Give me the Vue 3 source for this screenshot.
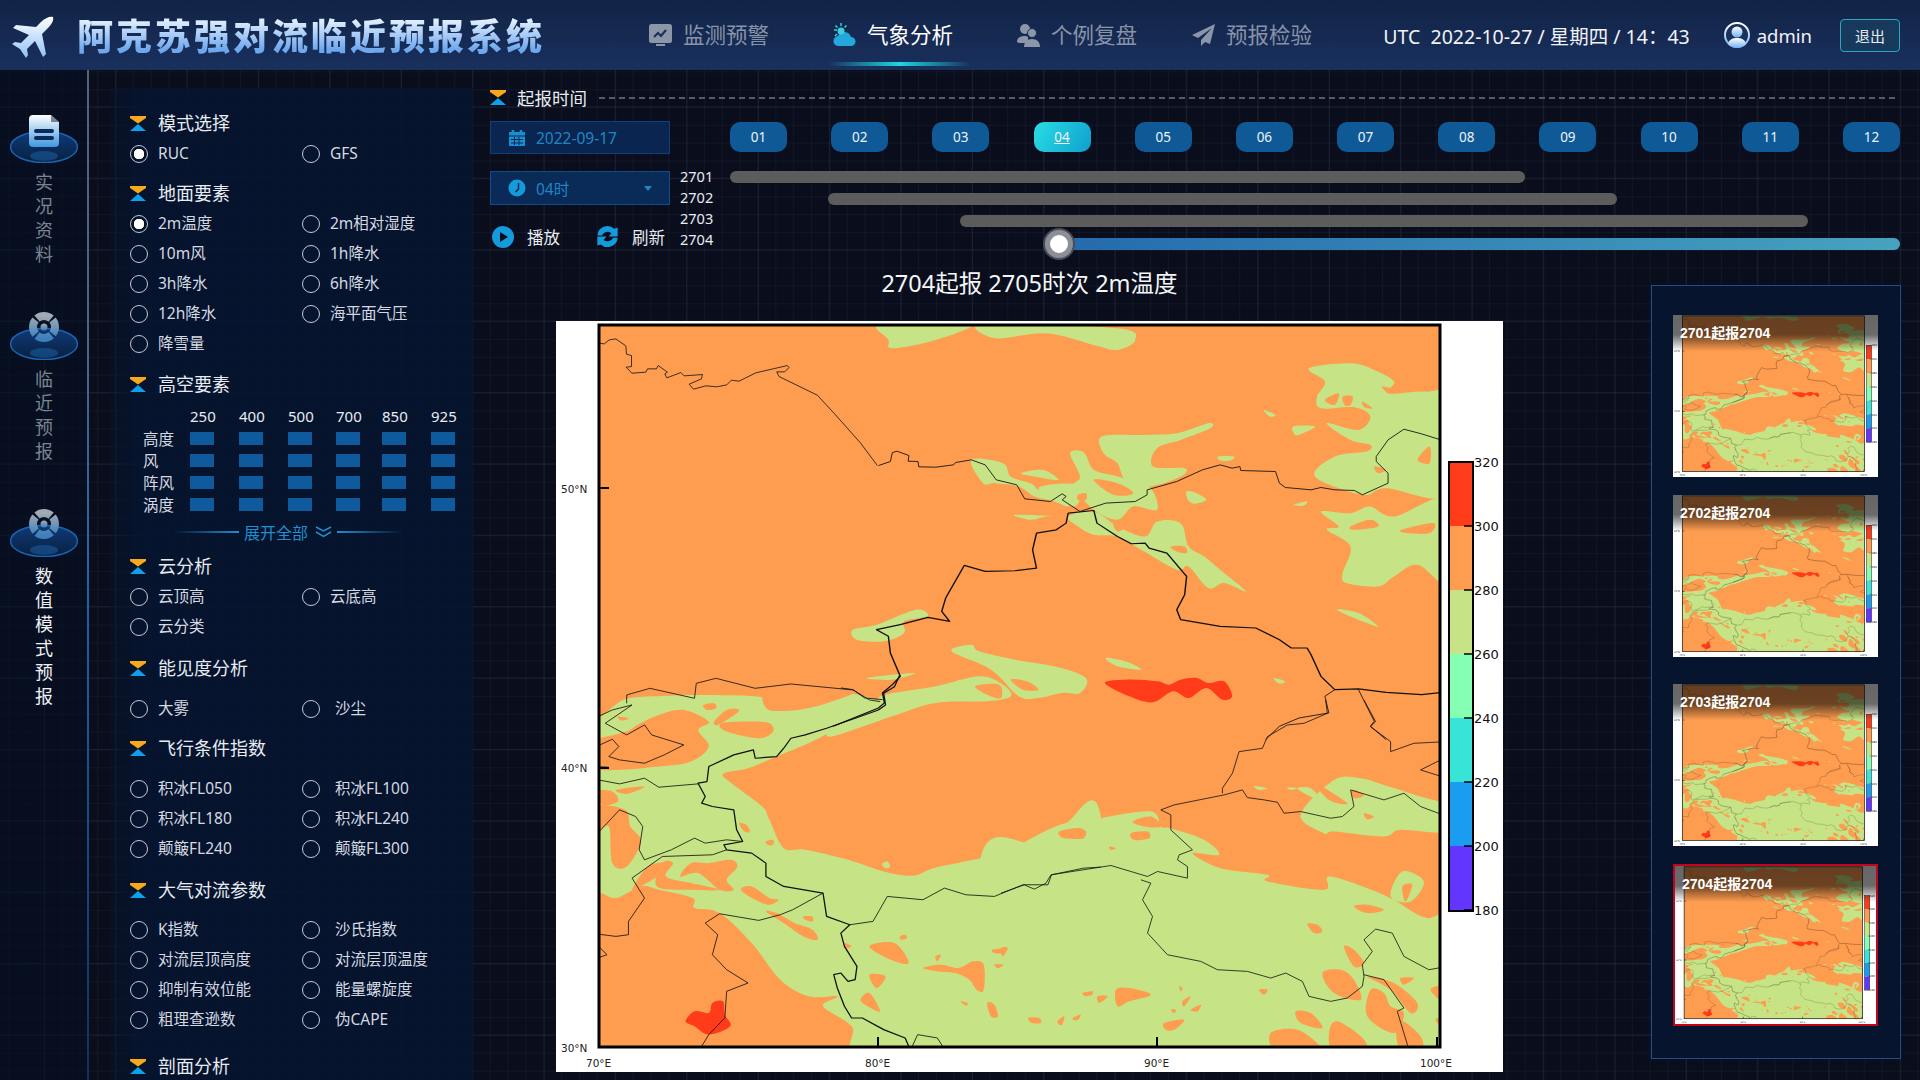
<template>
  <div class="page">
    <header class="topbar">
      <svg class="logo" viewBox="0 0 42 42" width="42" height="42">
        <defs>
          <linearGradient id="logoFill" x1="0" y1="0" x2="0" y2="1">
            <stop offset="0" stop-color="#ffffff" />
            <stop offset="1" stop-color="#8fc1f5" />
          </linearGradient>
        </defs>
        <path fill="url(#logoFill)" d="M41 1C38 0 33 2 29 6L24 11 4 9 1 12 17 19 9 27 3 26 0 28 8 33 14 42 16 39 15 33 23 25 31 41 34 38 30 18 36 12C40 8 42 4 41 1Z" />
      </svg>
      <h1 class="title">阿克苏强对流临近预报系统</h1>
      <nav class="nav">
        <a v-for="item in navItems" :key="item.name" class="nav-item" :class="{ active: item.active }">
          <svg v-if="item.icon === 'monitor'" viewBox="0 0 23 24" width="23" height="24">
            <rect x="0" y="1" width="23" height="19" rx="2.5" fill="#8b96a8" />
            <rect x="7" y="21" width="9" height="2" fill="#8b96a8" />
            <path d="M5 14l4-4 3 3 5-6" fill="none" stroke="#1a2f58" stroke-width="2" />
          </svg>
          <svg v-else-if="item.icon === 'cloud'" viewBox="0 0 23 24" width="23" height="24">
            <path d="M6 23a5 5 0 0 1-1-10 7 7 0 0 1 13 1 4.500 4.500 0 0 1 0 9Z" fill="#22a8dc" />
            <circle cx="8" cy="8" r="3.500" fill="#3bd0dc" />
            <path d="M8 0v3M1 7h3M2.500 2.500l2 2M13.500 2.500l-2 2M2 13l2-2" stroke="#3bd0dc" stroke-width="1.500" />
          </svg>
          <svg v-else-if="item.icon === 'people'" viewBox="0 0 23 24" width="23" height="24">
            <circle cx="8" cy="6" r="5" fill="#8b96a8" />
            <path d="M0 19c0-4 3-6 8-6 1 0 2 0 3 1v6H2Z" fill="#8b96a8" />
            <circle cx="15" cy="10" r="4.500" fill="#8b96a8" stroke="#1a2f58" />
            <path d="M7 24c0-5 3-8 8-8s8 3 8 8Z" fill="#8b96a8" />
          </svg>
          <svg v-else viewBox="0 0 23 24" width="23" height="24">
            <path d="M23 1L0 12l6 3L20 5 9 17v6l4-4 5 2Z" fill="#8b96a8" />
          </svg>
          <span>{{ item.name }}</span>
          <i v-if="item.active" class="nav-line"></i>
        </a>
      </nav>
      <div class="status">
        <span class="clock">{{ clockText }}</span>
        <svg class="user-icon" viewBox="0 0 26 26" width="26" height="26">
          <defs>
            <linearGradient id="userFill" x1="0" y1="0" x2="0" y2="1">
              <stop offset="0" stop-color="#ffffff" />
              <stop offset="1" stop-color="#6fb0f5" />
            </linearGradient>
          </defs>
          <circle cx="13" cy="13" r="12" fill="#1a3159" stroke="url(#userFill)" stroke-width="2" />
          <circle cx="13" cy="10" r="5.500" fill="url(#userFill)" />
          <path d="M4 22c1-5 5-6 9-6s8 1 9 6a12 12 0 0 1-18 0Z" fill="url(#userFill)" />
        </svg>
        <span class="user-name">admin</span>
        <button class="logout">退出</button>
      </div>
    </header>

    <div class="body">
      <aside class="rail">
        <div v-for="entry in railItems" :key="entry.label" class="rail-item" :class="{ current: entry.current }">
          <svg viewBox="0 0 68 48" width="68" height="48">
            <defs v-if="entry.icon === 'doc'">
              <linearGradient id="discFill" x1="0" y1="0" x2="0" y2="1">
                <stop offset="0" stop-color="#0f3a78" />
                <stop offset="1" stop-color="#08203f" />
              </linearGradient>
              <linearGradient id="docFill" x1="0" y1="0" x2="0" y2="1">
                <stop offset="0" stop-color="#ffffff" />
                <stop offset="1" stop-color="#3f97e0" />
              </linearGradient>
              <linearGradient id="targetFill" x1="0" y1="0" x2="0" y2="1">
                <stop offset="0" stop-color="#a4aab2" />
                <stop offset="1" stop-color="#3d80bc" />
              </linearGradient>
            </defs>
            <ellipse cx="34" cy="32" rx="33.500" ry="15.500" fill="url(#discFill)" stroke="#1a63b0" stroke-width="1.500" />
            <ellipse cx="34" cy="41" rx="14" ry="5" fill="#1a5a9c" opacity=".6" />
            <g v-if="entry.icon === 'doc'">
              <path d="M22 0h19l8 7v21a4 4 0 0 1-4 4H23a4 4 0 0 1-4-4V4a4 4 0 0 1 4-4Z" fill="url(#docFill)" />
              <path d="M41 0l8 7h-8Z" fill="#0a1a36" opacity=".5" />
              <rect x="24" y="14" width="20" height="4" rx="2" fill="#0b2c58" />
              <rect x="24" y="21" width="20" height="4" rx="2" fill="#0b2c58" />
            </g>
            <g v-else>
              <circle cx="34" cy="15" r="11" fill="none" stroke="url(#targetFill)" stroke-width="8" stroke-dasharray="15.300 2" stroke-dashoffset="8" />
              <circle cx="34" cy="15" r="3.500" fill="url(#targetFill)" />
            </g>
          </svg>
          <div class="rail-label">
            <span v-for="ch in entry.label" :key="ch">{{ ch }}</span>
          </div>
        </div>
      </aside>

      <section class="panel">
        <div v-for="sec in sections" :key="sec.title" class="group" :class="{ wide: sec.wide }" :style="{ marginTop: sec.top + 'px' }">
          <div class="group-head">
            <svg viewBox="0 0 16 15" width="16" height="15">
              <path d="M0 0h16v2L8 7.500 0 2Z" fill="#f7a81b" />
              <path d="M8 8l8 7H0Z" fill="#0fa0ea" />
            </svg>
            <span>{{ sec.title }}</span>
          </div>
          <template v-if="sec.table">
            <div class="levels">
              <span></span>
              <span v-for="lv in levels" :key="lv" class="level-num">{{ lv }}</span>
              <template v-for="row in levelRows" :key="row">
                <span class="level-name">{{ row }}</span>
                <i v-for="lv in levels" :key="lv" class="level-cell"></i>
              </template>
            </div>
            <div class="expand">
              <i class="expand-line left"></i>
              <span>展开全部</span>
              <svg viewBox="0 0 17 12" width="17" height="12">
                <path d="M1 1l7.500 4L16 1M1 6l7.500 4.500L16 6" fill="none" stroke="#1e8fd0" stroke-width="1.500" />
              </svg>
              <i class="expand-line right"></i>
            </div>
          </template>
          <div v-else class="options" :style="{ marginTop: (sec.gap || 0) + 'px' }">
            <label v-for="opt in sec.items" :key="opt" class="option">
              <i class="radio" :class="{ on: opt === 'RUC' || opt === '2m温度' }"></i>
              <span>{{ opt }}</span>
            </label>
          </div>
        </div>
      </section>

      <main class="main">
        <div class="time-head">
          <svg viewBox="0 0 16 15" width="16" height="15">
            <path d="M0 0h16v2L8 7.500 0 2Z" fill="#f7a81b" />
            <path d="M8 8l8 7H0Z" fill="#0fa0ea" />
          </svg>
          <span>起报时间</span>
          <i class="dash"></i>
        </div>

        <div class="controls">
          <div class="ctrl-left">
            <div class="field">
              <svg viewBox="0 0 18 18" width="18" height="18">
                <path d="M1 3h16v14H1Z" fill="#1a8fd0" />
                <path d="M5 1v4M13 1v4" stroke="#1a8fd0" stroke-width="2.500" />
                <path d="M1 7h16M3 10.500h12M3 14h12M6.500 8v8M11 8v8" stroke="#0a2650" stroke-width="1" />
              </svg>
              <span>2022-09-17</span>
            </div>
            <div class="field select">
              <svg viewBox="0 0 18 18" width="18" height="18">
                <circle cx="9" cy="9" r="8.500" fill="#149bdc" />
                <path d="M10.500 4v6l-3 3" fill="none" stroke="#0a2650" stroke-width="1.500" />
              </svg>
              <span>04时</span>
              <i class="caret"></i>
            </div>
            <div class="actions">
              <svg viewBox="0 0 22 22" width="22" height="22">
                <circle cx="11" cy="11" r="11" fill="#149bdc" />
                <path d="M8 6l8 5-8 5Z" fill="#0a0e1c" />
              </svg>
              <span class="act-text">播放</span>
              <svg class="refresh" viewBox="0 0 24 24" width="27" height="27">
                <path d="M3 11a9 9 0 0 1 15-6l3-1v8h-8l2.500-3a5.500 5.500 0 0 0-8.500 2Z" fill="#149bdc" />
                <path d="M21 13a9 9 0 0 1-15 6l-3 1v-8h8l-2.500 3a5.500 5.500 0 0 0 8.500-2Z" fill="#149bdc" />
              </svg>
              <span class="act-text">刷新</span>
            </div>
          </div>

          <div class="run-labels">
            <span v-for="run in runs" :key="run.name">{{ run.name }}</span>
          </div>

          <div class="timeline">
            <div class="hours">
              <span v-for="h in hours" :key="h" class="hour" :class="{ active: h === '04' }">{{ h }}</span>
            </div>
            <div class="tracks">
              <div v-for="run in runs" :key="run.name" class="track-row">
                <div class="track" :class="{ live: run.live }" :style="{ marginLeft: run.from + 'px', width: run.to - run.from + 'px' }">
                  <i v-if="run.live" class="knob"></i>
                </div>
              </div>
            </div>
          </div>
        </div>

        <div class="stage">
          <div class="center">
            <h2 class="map-title">2704起报 2705时次 2m温度</h2>
            <svg class="map" viewBox="555 321 947 751" width="947" height="751">
              <defs>
                <clipPath id="plotClip"><rect x="598" y="325" width="841" height="722" /></clipPath>
              </defs>
              <g id="weatherMap">
                <rect x="555" y="321" width="947" height="751" fill="#ffffff" />
                <g clip-path="url(#plotClip)">
                  <rect x="598" y="325" width="841" height="722" fill="#fe9c50" />
                  <g v-for="(layer, i) in fillLayers" :key="i" :transform="frames[layer.frame]" :fill="layer.fill">
                    <path v-for="(d, j) in layer.paths" :key="j" :d="d" />
                  </g>
                  <g v-for="(layer, i) in lineLayers" :key="'l' + i" :transform="frames[layer.frame]" fill="none" stroke="#111" :stroke-width="layer.width" stroke-linejoin="round">
                    <polyline v-for="(pts, j) in layer.lines" :key="j" :points="pts" />
                  </g>
                </g>
                <rect x="598" y="325" width="841" height="722" fill="none" stroke="#000" stroke-width="3" />
                <path d="M598 488h10M598 768h10M877 1047v-10M1156 1047v-10M1436 1047v-10" stroke="#000" stroke-width="2" />
                <g class="tick-text">
                  <text x="560" y="493">50°N</text>
                  <text x="560" y="772">40°N</text>
                  <text x="560" y="1052">30°N</text>
                  <text x="585" y="1067">70°E</text>
                  <text x="864" y="1067">80°E</text>
                  <text x="1143" y="1067">90°E</text>
                  <text x="1419" y="1067">100°E</text>
                </g>
                <rect v-for="band in colorBands" :key="band.color" x="1448" :y="band.y" width="24" height="64" :fill="band.color" />
                <rect x="1448" y="462" width="24" height="449" fill="none" stroke="#000" stroke-width="2" />
                <g v-for="band in colorTicks" :key="band.label">
                  <path :d="`M1463 ${band.y}h9`" stroke="#000" stroke-width="1.500" />
                  <text class="bar-text" x="1473" :y="band.y + 5">{{ band.label }}</text>
                </g>
              </g>
            </svg>
          </div>

          <aside class="thumbs">
            <div v-for="t in thumbs" :key="t.name" class="thumb" :class="[t.cls, { selected: t.selected }]">
              <svg viewBox="555 321 947 751" preserveAspectRatio="none">
                <use href="#weatherMap" />
              </svg>
              <div class="thumb-cap">{{ t.name }}起报2704</div>
            </div>
          </aside>
        </div>
      </main>
    </div>
  </div>
</template>

<script setup>
const clockText = 'UTC  2022-10-27 / 星期四 / 14：43';

const navItems = [
  { name: '监测预警', icon: 'monitor' },
  { name: '气象分析', icon: 'cloud', active: true },
  { name: '个例复盘', icon: 'people' },
  { name: '预报检验', icon: 'plane' },
];

const railItems = [
  { label: '实况资料', icon: 'doc' },
  { label: '临近预报', icon: 'target' },
  { label: '数值模式预报', icon: 'target', current: true },
];

const sections = [
  { title: '模式选择', top: 0, items: ['RUC', 'GFS'] },
  { title: '地面要素', top: 10, items: ['2m温度', '2m相对湿度', '10m风', '1h降水', '3h降水', '6h降水', '12h降水', '海平面气压', '降雪量'] },
  { title: '高空要素', top: 11, table: true },
  { title: '云分析', top: 10, items: ['云顶高', '云底高', '云分类'] },
  { title: '能见度分析', top: 12, gap: 10, wide: true, items: ['大雾', '沙尘'] },
  { title: '飞行条件指数', top: 10, gap: 10, wide: true, items: ['积冰FL050', '积冰FL100', '积冰FL180', '积冰FL240', '颠簸FL240', '颠簸FL300'] },
  { title: '大气对流参数', top: 12, gap: 9, wide: true, items: ['K指数', '沙氏指数', '对流层顶高度', '对流层顶温度', '抑制有效位能', '能量螺旋度', '粗理查逊数', '伪CAPE'] },
  { title: '剖面分析', top: 17, items: [] },
];

const levels = ['250', '400', '500', '700', '850', '925'];
const levelRows = ['高度', '风', '阵风', '涡度'];
const hours = ['01', '02', '03', '04', '05', '06', '07', '08', '09', '10', '11', '12'];

// offsets are measured from the left edge of the 01 button
const runs = [
  { name: '2701', from: 0, to: 795 },
  { name: '2702', from: 98, to: 887 },
  { name: '2703', from: 230, to: 1078 },
  { name: '2704', from: 329, to: 1170, live: true },
];

const thumbs = [
  { name: '2701', cls: 't1' },
  { name: '2702', cls: 't2' },
  { name: '2703', cls: 't3' },
  { name: '2704', cls: 't4', selected: true },
];

const colorList = ['#ff3b1a', '#fe9c50', '#c6e385', '#84ffb4', '#38e4d8', '#1a9cf0', '#6236ff'];
const colorBands = colorList.map((color, i) => ({ color, y: 462 + i * 64 }));
const colorTicks = ['320', '300', '280', '260', '240', '220', '200', '180'].map((label, i) => ({ label, y: 462 + i * 64 }));

// map shapes were traced in three differently scaled crops
const frames = {
  a: 'translate(540 660) scale(.357 .333)',
  b: 'translate(840 320) scale(.395 .333)',
  c: 'translate(1000 700) scale(.333)',
  d: 'translate(480 240) scale(.333)',
};

// closed catmull-rom curve through the traced points
const blob = (str) => {
  const p = str.trim().split(/\s+/).map((s) => s.split(',').map(Number));
  const n = p.length;
  let d = `M${p[0][0]} ${p[0][1]}`;
  for (let i = 0; i < n; i++) {
    const p0 = p[(i - 1 + n) % n];
    const p1 = p[i];
    const p2 = p[(i + 1) % n];
    const p3 = p[(i + 2) % n];
    const c1 = [p1[0] + (p2[0] - p0[0]) / 6, p1[1] + (p2[1] - p0[1]) / 6];
    const c2 = [p2[0] - (p3[0] - p1[0]) / 6, p2[1] - (p3[1] - p1[1]) / 6];
    d += `C${c1[0]} ${c1[1]} ${c2[0]} ${c2[1]} ${p2[0]} ${p2[1]}`;
  }
  return d + 'Z';
};

const GREEN = '#c6e385';
const ORANGE = '#fe9c50';
const RED = '#ff3b1a';

const fillLayers = [
  { frame: 'a', fill: GREEN, shapes: [
    '100,170 165,170 235,118 340,108 450,105 620,112 640,150 760,140 850,100 950,125 965,150 940,175 860,190 760,245 660,290 580,325 510,342 540,375 620,440 640,480 680,565 740,570 860,600 960,635 1040,648 1100,625 1210,600 1300,575 1420,510 1470,490 1568,470 1568,1200 930,1200 870,1100 790,1040 830,1010 750,1010 670,960 590,850 500,760 430,745 425,715 330,690 280,680 210,715 165,700 100,700',
  ] },
  { frame: 'c', fill: GREEN, shapes: [
    '-60,470 100,430 170,390 300,355 450,335 480,380 510,385 610,420 655,465 575,460 660,505 800,525 800,545 970,570 985,530 1100,565 1180,600 1280,655 1400,640 1400,1100 -60,1100',
  ] },
  { frame: 'a', fill: ORANGE, shapes: [
    '165,235 240,215 270,195 330,165 400,150 470,185 440,210 470,260 420,305 330,320 210,330 150,320 150,240',
    '455,135 485,130 490,145 465,150',
    '485,185 520,150 555,150 535,170 495,195',
    '505,190 590,185 640,190 650,215 610,235 520,215',
    '620,115 640,150 720,150 800,130 880,95 790,85 640,105',
    '215,170 245,175 225,182',
    '150,395 200,395 215,425 170,435',
    '210,390 290,380 240,402',
    '150,440 235,450 250,500 280,545 240,620 200,610 190,500 150,520',
    '390,650 420,610 470,610 530,600 550,620 520,660 540,690 500,690 440,640',
    '325,680 340,610 370,610 350,650 420,670 500,690 420,690',
    '255,690 300,620 360,610 340,640 280,680',
    '560,690 590,680 640,715 665,720 640,735 600,720',
    '630,755 660,760 710,790 760,810 775,840 735,830 680,790',
    '735,770 760,770 760,785 740,780',
    '630,545 650,540 650,555 635,555',
    '555,490 575,495 585,515 570,515',
    '920,860 990,850 1030,910 980,900',
    '1005,830 1020,825 1025,835 1010,840',
    '1070,925 1120,915 1170,925 1210,905 1240,915 1240,990 1220,990 1200,960 1160,940 1110,935',
    '1265,870 1305,865 1295,880 1270,880',
    '920,945 965,950 940,985',
    '895,1020 920,1000 950,1055 915,1040',
    '1250,1030 1270,1035 1280,1070 1260,1070',
    '1365,1075 1395,1075 1400,1090 1375,1090',
    '1450,1090 1465,1070 1460,1095',
    '1490,1080 1510,1065 1505,1080',
    '1175,1025 1195,1030 1190,1038',
    '1520,1000 1545,995 1540,1008',
    '850,850 870,860 850,865',
    '1105,890 1120,885 1110,905',
    '1270,915 1295,915 1280,925',
    '1450,520 1520,510 1520,535 1480,535',
  ] },
  { frame: 'a', fill: GREEN, shapes: ['955,612 970,605 978,620 965,625'] },
  { frame: 'c', fill: ORANGE, shapes: [
    '175,395 240,385 250,410 190,415',
    '390,400 440,395 445,415 400,420',
    '395,365 450,350 480,380 430,380',
    '325,440 345,445 330,450',
    '0,745 20,745 5,770',
    '85,955 120,960 100,970',
    '170,965 190,950 180,975',
    '215,955 240,945 225,960',
    '245,880 275,880 255,890',
    '290,890 320,890 295,910',
    '345,870 385,865 450,885 385,905 350,920',
    '535,860 545,865 540,875',
    '545,905 570,890 550,920',
    '510,930 525,930 520,940',
    '570,930 600,915 590,935',
    '490,970 550,960 520,990 495,990',
    '775,870 800,870 790,885',
    '920,672 950,675 965,695 940,700',
    '1060,620 1100,615 1150,630 1100,640',
    '965,820 1020,810 1060,840 1080,900 1000,880',
    '1030,740 1060,750 1090,790 1060,800',
    '1100,830 1180,850 1250,910 1230,940 1170,870',
    '810,1000 890,990 960,1040 960,1060 830,1060',
    '885,935 930,940 965,985 900,970',
    '985,1000 1010,965 1090,1020 1090,1060 1000,1060',
    '1110,870 1150,880 1170,920 1210,940 1180,1000 1100,950',
    '1190,960 1260,1010 1260,1060 1200,1060',
    '1290,870 1340,860 1340,915',
    '1200,835 1240,835 1210,855',
    '1305,960 1340,960 1340,1000',
  ] },
  { frame: 'b', fill: GREEN, shapes: [
    '100,10 330,10 240,60 130,85 120,60',
    '360,10 700,25 745,60 700,90 640,75 520,40 390,55',
    '1185,145 1290,130 1350,150 1400,185 1385,220 1480,215 1540,240 1540,520 1380,505 1320,525 1200,470 1250,410 1330,395 1340,375 1290,360 1230,310 1310,330 1340,290 1300,262 1215,265 1205,230 1225,185',
    '1145,320 1200,320 1170,340 1150,345',
    '1070,270 1100,285 1085,290',
    '1215,575 1290,580 1340,560 1400,590 1540,540 1540,790 1460,735 1400,770 1360,800 1280,790 1270,760 1290,680 1230,630 1260,620',
    '1255,870 1310,880 1360,920 1320,905',
    '1145,555 1180,545 1170,558',
    '660,350 760,345 850,340 930,310 935,325 860,360 800,385 790,440 870,445 860,470 780,500 720,480 700,430 665,400',
    '580,400 615,398 640,450 700,470 780,500 800,570 740,560 700,600 640,570 590,500 605,470',
    '330,420 410,430 430,470 480,490 500,510 520,505 560,530 575,560 540,545 490,530 450,500 390,490 360,490',
    '455,460 510,450 550,480 490,470',
    '500,505 600,495 590,560',
    '575,590 640,575 700,620 770,650 800,605 860,610 880,680 920,710 960,750 1025,815 970,790 930,805 880,740 850,750 760,690 700,650 640,645 600,620',
    '440,585 560,590 520,590 480,600',
    '875,515 900,520 925,540 895,552 878,540',
    '955,410 995,410 985,422 960,422',
    '30,930 90,915 190,870 220,890 160,905 160,940 110,965 40,960',
    '65,1075 185,1060 130,1080',
    '-20,1225 100,1170 100,1130 240,1100 350,1070 410,1095 430,1130 370,1145 240,1150 130,1190 -20,1250',
    '280,995 330,975 350,995 440,1020 540,1040 620,1075 605,1120 560,1120 500,1135 450,1130 380,1050',
    '670,1015 720,1025 760,1050 700,1040',
    '1095,1075 1125,1085 1110,1092',
  ] },
  { frame: 'b', fill: ORANGE, shapes: [
    '1225,240 1260,220 1250,255',
    '1270,230 1295,230 1290,255 1275,255',
    '1320,245 1345,265 1325,262',
    '1370,200 1400,210 1385,220',
    '1350,440 1380,450 1360,460',
    '1460,420 1490,380 1490,430',
    '1290,620 1340,600 1360,620 1300,630',
    '1420,630 1500,610 1490,640 1430,640',
    '640,480 700,490 740,520 690,525',
    '600,525 620,520 620,540 600,540',
    '835,680 870,680 875,700 850,695',
    '690,610 720,620 700,635',
    '430,1080 470,1085 500,1110 460,1110',
    '340,1100 400,1095 405,1135 370,1125',
  ] },
  { frame: 'c', fill: GREEN, shapes: [
    '900,345 1000,240 1080,235 1150,255 1260,290 1340,320 1340,395 1200,390 1150,410 1000,395 970,400',
    '760,258 800,265 775,270',
    '860,262 890,265 870,270',
    '890,265 930,265 960,300 920,285',
    '1205,515 1270,545 1230,605 1170,590',
  ] },
  { frame: 'c', fill: ORANGE, shapes: [
    '1055,270 1090,285 1060,295',
    '1090,340 1120,350 1100,358',
    '945,250 1040,310 985,300',
    '1205,560 1235,555 1215,605',
  ] },
  { frame: 'a', fill: RED, shapes: [
    '405,1085 430,1055 470,1060 480,1030 510,1025 515,1065 530,1100 470,1125 430,1100',
  ] },
  { frame: 'b', fill: RED, shapes: [
    '668,1090 720,1080 800,1085 830,1095 860,1080 900,1075 930,1090 970,1085 990,1130 965,1140 925,1105 880,1135 840,1115 790,1148 730,1130',
  ] },
].map((layer) => ({ frame: layer.frame, fill: layer.fill, paths: layer.shapes.map(blob) }));

const lineLayers = [
  { frame: 'd', width: 2.4, lines: [
    '357,310 370,312 385,300 405,297 435,318 437,343 452,347 452,380 436,382 453,400 495,397 500,387 527,387 532,377 560,397 552,402 558,414 600,398 610,408 665,404 662,417 625,433 638,448 675,438 708,441 738,435 752,421 775,424 825,399 920,377 925,383 912,396 888,396 895,410 1010,466 1060,520 1140,610 1190,677',
  ] },
  { frame: 'b', width: 2.4, lines: [
    '95,437 125,425 130,398 142,394 172,407 170,424 195,425 197,441 240,442 285,435 290,428 330,420 365,435 393,480 445,495 465,537 530,545 560,522 570,530 560,540 605,575 670,550 745,545 775,525 775,510 850,485 915,450 960,435 990,445 1010,440 1012,452 1100,455 1110,490 1125,503 1190,510 1215,503 1250,510 1300,512 1320,525 1385,490 1385,460 1355,425 1355,410 1385,360 1425,328 1470,342 1540,368',
    '0,1105 30,1110 60,1135 105,1140',
    '1250,1110 1225,1130 1235,1180 1160,1195 1110,1220 1075,1260',
    '1310,1110 1350,1205 1340,1220 1380,1260',
  ] },
  { frame: 'b', width: 3.6, lines: [
    '575,580 640,572 648,610 700,650 735,672 770,670 780,685 825,700 875,770 870,825 850,870 860,900 960,920 1050,925 1110,960 1140,985 1180,985 1190,1005 1215,1070 1250,1110 1310,1108 1380,1118 1470,1125 1540,1116',
    '575,580 570,610 545,630 495,640 485,690 495,745 440,753 365,755 312,737 265,835 255,875 275,905 220,893 150,915 90,930 120,950 125,1000 150,1070 130,1095 105,1120 110,1150 95,1165 -20,1220',
  ] },
  { frame: 'a', width: 3.6, lines: [
    '1005,45 990,80 960,100 965,135 945,150 880,175 800,205 740,225 700,235 680,265 660,290 600,295 595,270 540,285 470,320 465,365 440,370 460,410 450,430 480,440 540,450 548,510 565,545 512,555 520,570 590,580 630,610 630,650 680,680 790,700 800,770 865,795 840,820 850,860 885,920 880,960 860,965 840,940 820,945 830,985 850,1040 870,1075 900,1075 960,1110 1020,1135 1030,1160',
  ] },
  { frame: 'a', width: 2.4, lines: [
    '150,175 200,150 255,135 180,190 240,225 290,195 310,225 400,255 345,285 290,310 220,300 190,290 218,260 200,238 150,262',
    '240,130 240,105 305,85 430,115 435,70 490,55 600,85 700,72 875,90 920,120 950,125',
    '150,358 220,372 290,355 330,382 440,372',
    '150,530 185,490 220,450 265,470 285,500 275,570 290,600 365,570 430,535 460,550 520,540 565,545',
    '520,570 480,585 340,590 255,655 290,715 245,785 245,825 210,830 150,822',
    '150,848 185,885 150,898',
    '790,700 705,750 670,765 610,782 500,762 460,790 495,825 480,885 520,930 580,970 520,995 515,1075 470,1125 450,1160',
    '865,795 930,785 970,710 1070,720 1130,685 1190,705 1270,710 1350,675 1420,675 1430,645 1520,625 1568,622',
    '1040,1160 1055,1125 1110,1135 1125,1160',
    '150,320 190,322',
  ] },
  { frame: 'c', width: 2.4, lines: [
    '0,580 70,555 100,568 135,550 150,525 330,497 440,530 470,515 560,535 560,500 530,480 535,465 575,450 510,390 510,345 480,330 520,315 670,285 725,270 740,293 790,300 830,307 850,340 900,335 990,355 1025,350 1060,320 1050,270 1150,300 1210,280 1260,320 1340,350',
    '420,540 450,550 425,600 455,650 440,700 500,765 600,785 650,810 740,815 810,835 855,820 905,845 925,890 990,905 1040,895 1085,860 1090,830 1085,795 1115,755 1090,720 1125,688 1175,700 1210,770 1285,810 1340,800',
    '1090,825 1150,840 1210,925 1190,935 1225,1050',
    '665,280 665,265 695,220 715,155 785,145 800,110 860,75 910,70 980,40 975,0',
    '1090,0 1125,65 1110,80 1170,125 1170,155 1240,130 1340,125',
    '1260,210 1340,170',
    '1260,210 1340,235',
  ] },
];
</script>

<style>
html,
body {
  margin: 0;
  background: #0a0e1c;
  overflow: hidden;
}
</style>

<style scoped>
.page {
  width: 1920px;
  height: 1080px;
  overflow: hidden;
  color: #e8ecf2;
  font-family: "Noto Sans", "Noto Sans CJK SC", sans-serif;
  background-color: #0a0e1c;
  background-image:
    linear-gradient(rgba(150, 170, 210, 0.09) 1px, transparent 1px),
    linear-gradient(90deg, rgba(150, 170, 210, 0.09) 1px, transparent 1px),
    linear-gradient(rgba(150, 170, 210, 0.05) 1px, transparent 1px),
    linear-gradient(90deg, rgba(150, 170, 210, 0.05) 1px, transparent 1px);
  background-size: 71.4px 71.4px, 71.4px 71.4px, 17.85px 17.85px, 17.85px 17.85px;
  background-position: 44px 35px, 44px 35px, 8px 0, 8px 0;
}

.topbar {
  height: 70px;
  display: flex;
  align-items: center;
  padding: 0 20px 0 12px;
  background: linear-gradient(180deg, rgba(18, 36, 72, 0.94), rgba(26, 50, 98, 0.94));
}

.logo {
  flex: none;
  margin-top: 4px;
}

.title {
  margin: 0 0 3px 23px;
  width: 465px;
  flex: none;
  font-family: "Noto Sans CJK SC", sans-serif;
  font-size: 36px;
  font-weight: 900;
  letter-spacing: 3px;
  line-height: 44px;
  white-space: nowrap;
  background: linear-gradient(180deg, #dfeeff 20%, #6fa8ee 85%);
  -webkit-background-clip: text;
  background-clip: text;
  color: transparent;
}

.nav {
  display: flex;
  gap: 64px;
  margin-left: 107px;
}

.nav-item {
  position: relative;
  display: flex;
  align-items: center;
  gap: 11px;
  font-size: 21.500px;
  line-height: 30px;
  color: #8793a8;
}

.nav-item:last-child {
  margin-left: -9px;
}

.nav-item.active {
  color: #ffffff;
}

.nav-line {
  position: absolute;
  left: -5px;
  bottom: -16px;
  width: 143px;
  height: 4px;
  background: linear-gradient(90deg, transparent, #1fd6de 50%, transparent);
}

.status {
  margin-left: auto;
  display: flex;
  align-items: center;
}

.clock {
  font-size: 19.500px;
  white-space: pre;
  color: #f0f3f7;
}

.user-icon {
  margin-left: 34px;
}

.user-name {
  margin-left: 7px;
  font-size: 18.500px;
  color: #f0f3f7;
}

.logout {
  margin-left: 28px;
  width: 60px;
  height: 33px;
  padding: 0;
  border: 1px solid #2aa8ba;
  border-radius: 4px;
  background: #173a5c;
  color: #e8ecf2;
  font: 15px "Noto Sans CJK SC", sans-serif;
}

.body {
  display: flex;
  height: 1010px;
}

.rail {
  width: 87px;
  flex: none;
  box-sizing: content-box;
  padding-top: 45px;
  border-right: 2px solid transparent;
  border-image: linear-gradient(180deg, #55617a 0, #4a6488 30%, #1f63ad 50%, #17457e 80%, #14305a 100%) 1;
  background: rgba(6, 14, 36, 0.55);
}

.rail-item {
  width: 68px;
  margin: 0 0 46px 10px;
}

.rail-item svg {
  display: block;
}

.rail-label {
  display: flex;
  flex-direction: column;
  align-items: center;
  margin-top: 7px;
  font-size: 18px;
  line-height: 24px;
  color: #7a8592;
}

.rail-item.current .rail-label {
  color: #eef1f5;
}

.panel {
  width: 363px;
  flex: none;
  box-sizing: border-box;
  margin: 18px 0 0 21px;
  padding: 20px 0 0 20px;
  overflow: hidden;
  background: linear-gradient(90deg, rgba(5, 20, 48, 0.3), rgba(5, 20, 48, 0.88) 30px);
}

.group-head {
  display: flex;
  align-items: center;
  gap: 12px;
  height: 30px;
  font-size: 18px;
  color: #e8ecf2;
}

.group-head span {
  padding-bottom: 2px;
}

.options {
  display: grid;
  grid-template-columns: 172px 172px;
}

.option {
  display: flex;
  align-items: center;
  gap: 10px;
  height: 30px;
  font-size: 15.500px;
  color: #d4d9e1;
}

.option span {
  padding-bottom: 1px;
}

.group.wide .option:nth-child(even) {
  gap: 15px;
}

.radio {
  box-sizing: border-box;
  width: 18px;
  height: 18px;
  flex: none;
  margin-top: 1px;
  border: 1px solid #c3cad5;
  border-radius: 50%;
}

.radio.on {
  background: radial-gradient(circle, #fff 0, #fff 5px, transparent 5.500px);
}

.levels {
  display: grid;
  grid-template-columns: 47px 49px 49px 48px 46px 49px 24px;
  grid-template-rows: 23px;
  grid-auto-rows: 22px;
  margin: 5px 0 0 13px;
  align-items: center;
}

.level-num {
  height: 24px;
  line-height: 24px;
  font-size: 15px;
  color: #e8ecf2;
  white-space: nowrap;
}

.level-name {
  font-size: 15.500px;
  color: #d4d9e1;
}

.level-cell {
  display: block;
  width: 24px;
  height: 13px;
  background: #0f5a9c;
}

.expand {
  display: flex;
  align-items: center;
  justify-content: center;
  gap: 5px;
  width: 230px;
  height: 18px;
  margin: 8px 0 0 43px;
  font-size: 16px;
  color: #1e8fd0;
}

.expand svg {
  margin-left: 2px;
}

.expand-line {
  flex: 1;
  height: 2px;
}

.expand-line.left {
  background: linear-gradient(90deg, transparent, #1e8fd0);
}

.expand-line.right {
  background: linear-gradient(90deg, #1e8fd0, transparent);
}

.main {
  width: 1411px;
  flex: none;
  margin-left: 17px;
  padding-top: 17px;
}

.time-head {
  display: flex;
  align-items: center;
  gap: 11px;
  height: 20px;
  font-size: 17.500px;
  color: #e8ecf2;
}

.dash {
  width: 1296px;
  height: 0;
  margin-left: 1px;
  margin-top: 1px;
  border-top: 2px dashed #565b68;
}

.controls {
  display: flex;
  height: 143px;
}

.ctrl-left {
  width: 180px;
  flex: none;
  padding-top: 14px;
}

.field {
  display: flex;
  align-items: center;
  gap: 10px;
  box-sizing: border-box;
  height: 33px;
  padding-left: 17px;
  background: #0a2650;
  border: 1px solid #114079;
  color: #1f86c4;
  font-size: 15.500px;
}

.field.select {
  margin-top: 17px;
  height: 34px;
  background: #0a2a58;
  border-color: #134c8c;
}

.caret {
  margin-left: auto;
  margin-right: 17px;
  border: 4px solid transparent;
  border-top: 5px solid #1f86c4;
  border-bottom: 0;
}

.actions {
  display: flex;
  align-items: center;
  margin-top: 18px;
  padding-left: 2px;
}

.act-text {
  margin-left: 13px;
  font-size: 16.500px;
  color: #e8ecf2;
}

.refresh {
  margin-left: 34px;
}

.act-text:last-child {
  margin-left: 11px;
}

.run-labels {
  display: flex;
  flex-direction: column;
  width: 60px;
  flex: none;
  padding: 59px 0 0 10px;
  box-sizing: border-box;
  font-size: 14.500px;
  line-height: 21px;
  color: #e8ecf2;
}

.timeline {
  width: 1170px;
  flex: none;
  padding-top: 15px;
}

.hours {
  display: flex;
  justify-content: space-between;
}

.hour {
  width: 57px;
  height: 30px;
  border-radius: 10px;
  background: #0f5a96;
  font-size: 13.500px;
  line-height: 30px;
  text-align: center;
  color: #eef3f8;
}

.hour.active {
  background: linear-gradient(120deg, #2adde2, #0f9fd0);
  text-decoration: underline;
}

.tracks {
  margin-top: 19px;
}

.track-row {
  height: 22px;
}

.track-row:last-child {
  margin-top: 1px;
}

.track {
  position: relative;
  height: 12px;
  border-radius: 6px;
  background: #5c5c5c;
}

.track.live {
  background: linear-gradient(90deg, #256aad, #46a3bf);
}

.knob {
  position: absolute;
  left: -14px;
  top: -8px;
  box-sizing: border-box;
  width: 28px;
  height: 28px;
  border-radius: 50%;
  background: #fff;
  border: 5px solid #8d8f98;
  box-shadow: 0 0 0 2px #4a4c58;
}

.stage {
  display: flex;
  margin-top: 15px;
}

.center {
  width: 947px;
  flex: none;
  margin-left: 66px;
}

.map-title {
  margin: 0 0 20px;
  height: 36px;
  font-size: 23.500px;
  font-weight: 400;
  line-height: 36px;
  text-align: center;
  color: #f4f6f9;
}

.map {
  display: block;
}

.tick-text text {
  font-family: "DejaVu Sans", sans-serif;
  font-size: 10.500px;
  fill: #222;
}

.bar-text {
  font-family: "DejaVu Sans", sans-serif;
  font-size: 13px;
  fill: #111;
}

.thumbs {
  box-sizing: border-box;
  width: 250px;
  height: 774px;
  flex: none;
  margin: 20px 0 0 148px;
  padding: 29px 0 0 21px;
  background: #07142e;
  border: 1px solid #1b4f8e;
}

.thumb {
  position: relative;
  box-sizing: border-box;
  width: 205px;
  height: 162px;
  overflow: hidden;
}

.thumb svg {
  display: block;
  width: 100%;
  height: 100%;
}

.t2 {
  margin-top: 18px;
}

.t3 {
  margin-top: 27px;
}

.t4 {
  margin-top: 18px;
}

.thumb.selected {
  border: 2px solid #c4041c;
}

.thumb-cap {
  position: absolute;
  left: 0;
  top: 0;
  width: 100%;
  height: 36px;
  padding-left: 7px;
  box-sizing: border-box;
  background: linear-gradient(180deg, rgba(0, 0, 0, 0.6) 0, rgba(0, 0, 0, 0.58) 55%, transparent 100%);
  font: bold 14px/36px "Liberation Sans", "Noto Sans CJK SC", sans-serif;
  color: #fff;
}
</style>
